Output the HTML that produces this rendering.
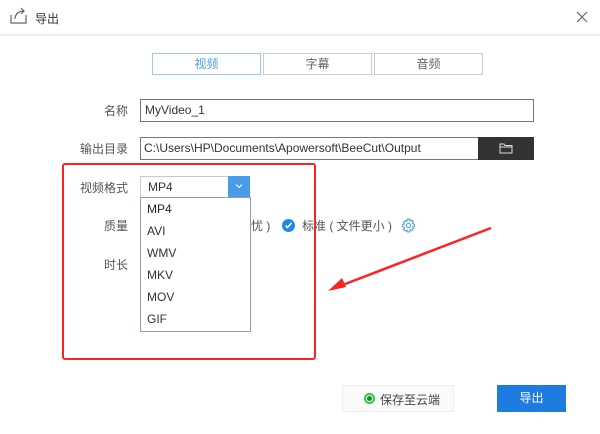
<!DOCTYPE html>
<html><head><meta charset="utf-8"><style>
*{margin:0;padding:0;box-sizing:border-box}
body{width:600px;height:434px;background:#fff;position:relative;overflow:hidden;font-family:"Liberation Sans","Noto Sans CJK SC",sans-serif;font-size:12px;color:#333}
.a{position:absolute}
.tab{position:absolute;top:53px;height:22px;width:109px;border:1px solid #ccc;text-align:center;line-height:20px;color:#666}
.lbl{position:absolute;color:#555;font-size:12px;text-align:right;width:70px}
.it{position:absolute;left:147px;font-size:12px;color:#333}
</style></head><body>
<div class="a" style="left:0;top:0;width:600px;height:35px;border-bottom:1px solid #e8e8e8;box-shadow:0 1px 2px #eee"></div>
<svg class="a" style="left:9px;top:6px" width="20" height="20" viewBox="0 0 20 20" fill="none" stroke="#666" stroke-width="1.2"><path d="M2 9v8h15v-8"/><path d="M6 13c0-5 4-8 9-8"/><path d="M12 2l3 3-3 3"/></svg>
<div class="a" style="left:35px;top:10px;font-size:12px;color:#333">导出</div>
<svg class="a" style="left:576px;top:11px" width="12" height="12" viewBox="0 0 12 12" stroke="#666" stroke-width="1.2"><path d="M1 1l10 10M11 1L1 11"/></svg>
<div class="tab" style="left:152px;border-color:#9cc9ee;color:#4a9be0">视频</div>
<div class="tab" style="left:263px">字幕</div>
<div class="tab" style="left:374px">音频</div>
<div class="lbl" style="left:58px;top:102px">名称</div>
<div class="a" style="left:140px;top:99px;width:394px;height:23px;border:1px solid #777;padding-left:4px;line-height:21px;font-size:12px">MyVideo_1</div>
<div class="lbl" style="left:58px;top:140px">输出目录</div>
<div class="a" style="left:140px;top:137px;width:340px;height:23px;border:1px solid #777;padding-left:3px;line-height:21px;font-size:12px;white-space:nowrap;overflow:hidden">C:\Users\HP\Documents\Apowersoft\BeeCut\Output</div>
<div class="a" style="left:478px;top:137px;width:56px;height:23px;background:#333"></div>
<svg class="a" style="left:499px;top:142px" width="14" height="12" viewBox="0 0 14 12" fill="none" stroke="#ddd" stroke-width="1"><path d="M1 2h4l1 1.5h7v7.5H1zM1 5h12"/></svg>
<div class="a" style="left:62px;top:163px;width:254px;height:197px;border:2px solid #f22;border-radius:3px"></div>
<div class="lbl" style="left:58px;top:179px">视频格式</div>
<div class="a" style="left:140px;top:176px;width:110px;height:22px;border:1px solid #bcd;padding-left:7px;line-height:20px;font-size:12px">MP4</div>
<div class="a" style="left:228px;top:176px;width:22px;height:21px;background:#4a9be8"></div>
<svg class="a" style="left:234px;top:182px" width="10" height="8" viewBox="0 0 10 8" fill="none" stroke="#fff" stroke-width="1"><path d="M2 2.5l3 3 3-3"/></svg>
<div class="a" style="left:140px;top:197px;width:111px;height:135px;border:1px solid #8aa0bb;background:#fff"></div>
<div class="it" style="top:202px;color:#222">MP4</div>
<div class="it" style="top:224px">AVI</div>
<div class="it" style="top:246px">WMV</div>
<div class="it" style="top:268px">MKV</div>
<div class="it" style="top:290px">MOV</div>
<div class="it" style="top:312px">GIF</div>
<div class="lbl" style="left:58px;top:217px">质量</div>
<div class="lbl" style="left:58px;top:256px">时长</div>
<div class="a" style="left:251px;top:217px;color:#555">忧 )</div>
<div class="a" style="left:282px;top:219px;width:13px;height:13px;border-radius:50%;background:#1e88e5"></div>
<svg class="a" style="left:282px;top:219px" width="13" height="13" viewBox="0 0 13 13" fill="none" stroke="#fff" stroke-width="1.5"><path d="M3.5 6.5l2 2 4-4.5"/></svg>
<div class="a" style="left:302px;top:217px;color:#555">标准 ( 文件更小 )</div>
<svg class="a" style="left:401px;top:218px" width="15" height="15" viewBox="0 0 14 14" fill="none" stroke="#4a9be8" stroke-width="1"><circle cx="7" cy="7" r="2"/><path d="M6 1h2l.5 1.7 1.6-.8 1.4 1.4-.8 1.6L12.5 6v2l-1.7.5.8 1.6-1.4 1.4-1.6-.8L8 13H6l-.5-1.7-1.6.8-1.4-1.4.8-1.6L1.5 8V6l1.7-.5-.8-1.6 1.4-1.4 1.6.8z"/></svg>
<svg class="a" style="left:320px;top:220px" width="180" height="80" viewBox="320 220 180 80"><path d="M491 228L340 286" stroke="#f22" stroke-width="2.5"/><path d="M328 291l14-13 4 9z" fill="#f22"/></svg>
<div class="a" style="left:342px;top:385px;width:112px;height:27px;border:1px solid #eee;background:#fafafa"></div>
<div class="a" style="left:364px;top:393px;width:11px;height:11px;border-radius:50%;border:2px solid #2ecc40"></div>
<div class="a" style="left:367px;top:396px;width:5px;height:5px;border-radius:50%;background:#1a8a30"></div>
<div class="a" style="left:380px;top:391px;color:#444">保存至云端</div>
<div class="a" style="left:497px;top:385px;width:69px;height:27px;background:#1e7be0;color:#fff;text-align:center;line-height:27px">导出</div>
</body></html>
